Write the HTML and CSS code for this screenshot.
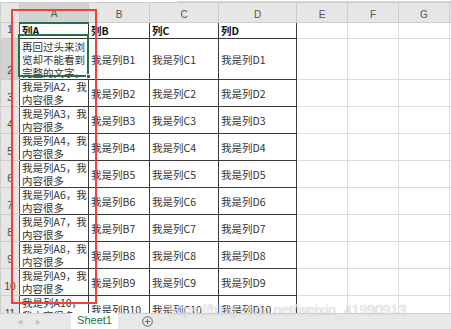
FILE: index.html
```html
<!DOCTYPE html>
<html lang="zh-CN">
  <head>
    <meta charset="UTF-8" />
    <meta name="viewport" content="width=device-width,initial-scale=1.0" />
    <title>Sheet1</title>
    <link rel="stylesheet" href="styles.css">
  </head>
  <body>
    <div class="topbar"><div class="formula"></div></div>
    <div class="sheet">
      <table class="grid">
        <colgroup>
          <col class="c-head" />
          <col class="c-a" />
          <col class="c-b" />
          <col class="c-c" />
          <col class="c-d" />
          <col class="c-e" />
          <col class="c-e" />
          <col class="c-e" />
          <col class="c-h" />
        </colgroup>
        <thead>
          <tr class="colhead">
            <th class="corner"></th>
            <th class="active">A</th>
            <th>B</th>
            <th>C</th>
            <th>D</th>
            <th>E</th>
            <th>F</th>
            <th>G</th>
            <th>H</th>
          </tr>
        </thead>
        <tbody>
          <tr class="r1">
            <th class="rowhead">1</th>
            <td class="d bold">列A</td>
            <td class="d bold">列B</td>
            <td class="d bold">列C</td>
            <td class="d bold">列D</td>
            <td></td><td></td><td></td><td></td>
          </tr>
          <tr class="r2">
            <th class="rowhead sel-row">2</th>
            <td class="d">再回过头来浏<br>览却不能看到<br>完整的文字。</td>
            <td class="d">我是列B1</td>
            <td class="d">我是列C1</td>
            <td class="d">我是列D1</td>
            <td></td><td></td><td></td><td></td>
          </tr>
          <tr class="rn">
            <th class="rowhead">3</th>
            <td class="d">我是列A2，我<br>内容很多</td>
            <td class="d">我是列B2</td>
            <td class="d">我是列C2</td>
            <td class="d">我是列D2</td>
            <td></td><td></td><td></td><td></td>
          </tr>
          <tr class="rn">
            <th class="rowhead">4</th>
            <td class="d">我是列A3，我<br>内容很多</td>
            <td class="d">我是列B3</td>
            <td class="d">我是列C3</td>
            <td class="d">我是列D3</td>
            <td></td><td></td><td></td><td></td>
          </tr>
          <tr class="rn">
            <th class="rowhead">5</th>
            <td class="d">我是列A4，我<br>内容很多</td>
            <td class="d">我是列B4</td>
            <td class="d">我是列C4</td>
            <td class="d">我是列D4</td>
            <td></td><td></td><td></td><td></td>
          </tr>
          <tr class="rn">
            <th class="rowhead">6</th>
            <td class="d">我是列A5，我<br>内容很多</td>
            <td class="d">我是列B5</td>
            <td class="d">我是列C5</td>
            <td class="d">我是列D5</td>
            <td></td><td></td><td></td><td></td>
          </tr>
          <tr class="rn">
            <th class="rowhead">7</th>
            <td class="d">我是列A6，我<br>内容很多</td>
            <td class="d">我是列B6</td>
            <td class="d">我是列C6</td>
            <td class="d">我是列D6</td>
            <td></td><td></td><td></td><td></td>
          </tr>
          <tr class="rn">
            <th class="rowhead">8</th>
            <td class="d">我是列A7，我<br>内容很多</td>
            <td class="d">我是列B7</td>
            <td class="d">我是列C7</td>
            <td class="d">我是列D7</td>
            <td></td><td></td><td></td><td></td>
          </tr>
          <tr class="rn">
            <th class="rowhead">9</th>
            <td class="d">我是列A8，我<br>内容很多</td>
            <td class="d">我是列B8</td>
            <td class="d">我是列C8</td>
            <td class="d">我是列D8</td>
            <td></td><td></td><td></td><td></td>
          </tr>
          <tr class="rn">
            <th class="rowhead">10</th>
            <td class="d">我是列A9，我<br>内容很多</td>
            <td class="d">我是列B9</td>
            <td class="d">我是列C9</td>
            <td class="d">我是列D9</td>
            <td></td><td></td><td></td><td></td>
          </tr>
          <tr class="rn">
            <th class="rowhead">11</th>
            <td class="d">我是列A10，<br>我内容很多</td>
            <td class="d">我是列B10</td>
            <td class="d">我是列C10</td>
            <td class="d">我是列D10</td>
            <td></td><td></td><td></td><td></td>
          </tr>
        </tbody>
      </table>
      <!-- selected cell A2 -->
      <div class="selection"><span class="handle"></span></div>
      <!-- red annotation box -->
      <div class="marker"></div>
    </div>
    <div class="tabs">
      <div class="nav">
        <span class="arrow">&#9664;</span>
        <span class="arrow">&#9654;</span>
      </div>
      <div class="tab">Sheet1</div>
      <div class="add">
        <svg width="11" height="11" viewBox="0 0 11 11">
          <circle cx="5.5" cy="5.5" r="4.8" fill="none" stroke="#666" stroke-width="1" />
          <path d="M5.5 3v5M3 5.5h5" stroke="#666" stroke-width="1" />
        </svg>
      </div>
    </div>
    <div class="watermark">https://blog.csdn.net/weixin_41990913</div>
  </body>
</html>
```

FILE: styles.css
```css
* {
  padding: 0;
  margin: 0;
  box-sizing: border-box;
}
body {
  position: relative;
  width: 451px;
  height: 329px;
  overflow: hidden;
  background: #fff;
  font-family: 'Noto Sans CJK SC', sans-serif;
  font-size: 10.5px;
  color: #333;
}
.topbar {
  height: 2px;
  background: #fff;
  position: relative;
}
.formula {
  margin-left: 177px;
  height: 2px;
  border-bottom: 1px solid #d6d6d6;
}
.sheet {
  position: relative;
  height: 311px;
  overflow: hidden;
}
.grid {
  border-collapse: collapse;
  table-layout: fixed;
  width: 479px;
}
.c-head {
  width: 19px;
}
.c-a {
  width: 69px;
}
.c-b {
  width: 61px;
}
.c-c {
  width: 69px;
}
.c-d {
  width: 78px;
}
.c-e {
  width: 51px;
}
.c-h {
  width: 81px;
}
.grid td,
.grid th {
  border: 1px solid #dcdcdc;
  padding: 0 2px;
  white-space: nowrap;
  overflow: hidden;
  line-height: 13px;
  vertical-align: middle;
  text-align: left;
  font-weight: normal;
}
.colhead {
  height: 20px;
}
.colhead th {
  background: #e6e6e6;
  border-color: #cdcdcd;
  text-align: center;
  color: #555;
  font-family: 'Liberation Sans', sans-serif;
  font-size: 10px;
  padding-top: 3px;
}
.colhead th.active {
  background: #d2d2d2;
  color: #217346;
  border-bottom: 2px solid #217346;
}
.grid .rowhead {
  background: #e6e6e6;
  border-color: #cdcdcd;
  border-right-color: #555;
  text-align: center;
  vertical-align: bottom;
  color: #444;
  font-family: 'Liberation Sans', sans-serif;
  font-size: 10px;
  padding: 0 0 2px;
}
.grid .sel-row {
  background: #d2d2d2;
}
.grid td.d {
  border-color: #3a3a3a;
}
.grid td.bold {
  font-weight: bold;
  color: #111;
}
.r1 {
  height: 13px;
}
.r2 {
  height: 41px;
}
.rn {
  height: 27px;
}
.selection {
  position: absolute;
  left: 18px;
  top: 32px;
  width: 71px;
  height: 43px;
  border: 2px solid #217346;
}
.handle {
  position: absolute;
  right: -4px;
  bottom: -4px;
  width: 5px;
  height: 5px;
  background: #217346;
  border: 1px solid #fff;
}
.marker {
  position: absolute;
  left: 11px;
  top: 7px;
  width: 86px;
  height: 295px;
  border: 2px solid #f2413a;
}
.tabs {
  height: 16px;
  display: flex;
  align-items: stretch;
  background: #e8e8e8;
  border-top: 1px solid #d0d0d0;
}
.nav {
  width: 71px;
  display: flex;
  align-items: center;
  gap: 12px;
  padding-left: 17px;
}
.arrow {
  font-size: 6px;
  color: #c4c4c4;
}
.tab {
  width: 47px;
  background: #fff;
  color: #217346;
  font-family: 'Liberation Sans', sans-serif;
  font-size: 11px;
  text-align: center;
  line-height: 15px;
  margin-top: -1px;
}
.add {
  display: flex;
  align-items: center;
  margin-left: 24px;
}
.watermark {
  position: absolute;
  left: 168px;
  top: 302px;
  font-family: 'Liberation Sans', sans-serif;
  font-size: 14px;
  color: rgba(255, 255, 255, 0.75);
  text-shadow: 0 0 1px rgba(0, 0, 0, 0.35);
  white-space: nowrap;
}
```
